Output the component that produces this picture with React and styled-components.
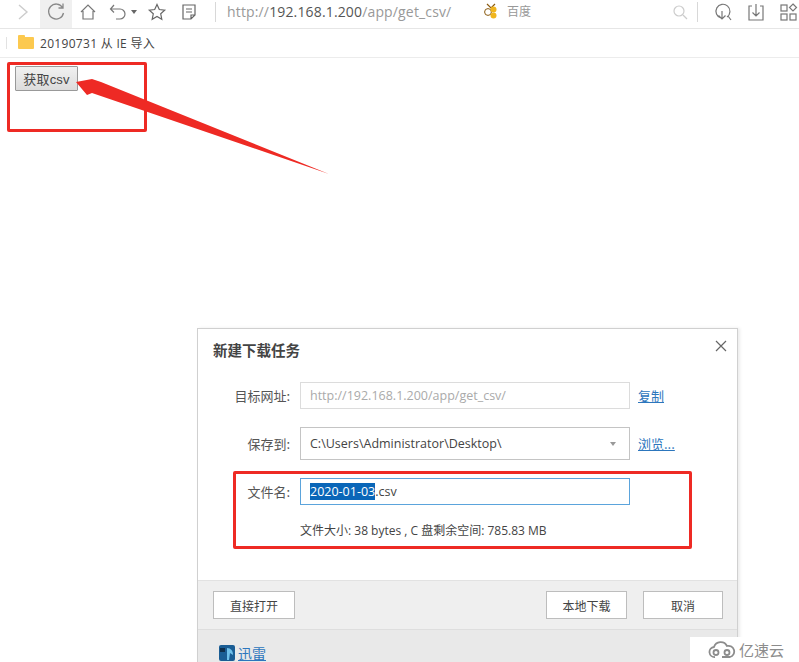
import React from 'react'
import styled, { createGlobalStyle } from 'styled-components'

const Global = createGlobalStyle`
  html, body { margin: 0; padding: 0; background: #fff; overflow: hidden; }
  body { width: 799px; height: 662px; font-family: "Open Sans", "Noto Sans CJK SC", sans-serif; color: #333; }
`

const Page = styled.div`
  position: relative;
  width: 799px;
  height: 662px;
  overflow: hidden;
  background: #fff;
`

const Toolbar = styled.div`
  display: flex;
  align-items: center;
  height: 28px;
  border-bottom: 1px solid #e6e6e6;
`

const Tool = styled.div`
  box-sizing: border-box;
  display: flex;
  align-items: center;
  justify-content: center;
  flex: none;
  width: ${p => p.$w || 30}px;
  height: 28px;
  padding-bottom: 5px;
  margin-left: ${p => p.$ml || 0}px;
  background: ${p => (p.$active ? '#f0f0f0' : 'transparent')};
`

const Divider = styled.div`
  flex: none;
  width: 1px;
  height: 20px;
  margin: 0 0 4px ${p => p.$ml || 0}px;
  background: #d8d8d8;
`

const Url = styled.div`
  flex: none;
  width: 240px;
  margin: 0 0 6px 11px;
  font-size: 14px;
  letter-spacing: 0.15px;
  color: #999;
  white-space: nowrap;
`

const Host = styled.span`
  color: #555;
`

const EngineName = styled.div`
  flex: none;
  width: 165px;
  margin: 0 0 6px 8px;
  font-size: 12px;
  color: #999;
`

const Bookmarks = styled.div`
  display: flex;
  align-items: center;
  height: 28px;
  padding-left: 6px;
  border-bottom: 1px solid #ececec;
  font-size: 12px;
  letter-spacing: 0.3px;
  color: #444;
`

const BarTick = styled.div`
  width: 1px;
  height: 12px;
  margin-right: 11px;
  background: #e2e2e2;
`

const Folder = styled.div`
  position: relative;
  width: 16px;
  height: 12px;
  margin-right: 6px;
  border-radius: 1px;
  background: #fcc94f;

  &::before {
    content: '';
    position: absolute;
    left: 0;
    top: -2px;
    width: 7px;
    height: 3px;
    border-radius: 1px 1px 0 0;
    background: #fcc94f;
  }
`

const Content = styled.div`
  padding: 8px 0 0 15px;
`

const GetButton = styled.button`
  display: block;
  box-sizing: border-box;
  width: 63px;
  height: 25px;
  padding: 0;
  border: 1px solid #999;
  border-radius: 1px;
  background: linear-gradient(#f1f1f1, #dcdcdc);
  font: 13px "Liberation Sans", "Noto Sans CJK SC", sans-serif;
  letter-spacing: 0.2px;
  color: #444;
`

const Dialog = styled.div`
  box-sizing: border-box;
  width: 541px;
  height: 334px;
  margin: 237px 0 0 182px;
  border: 1px solid #d0d0d0;
  border-bottom: 0;
  box-shadow: 2px 0 3px rgba(0, 0, 0, 0.08);
  background: #fff;
  display: flex;
  flex-direction: column;
`

const Head = styled.div`
  display: flex;
  align-items: flex-start;
  justify-content: space-between;
  height: 44px;
  padding: 10px 9px 0 15px;
  box-sizing: border-box;
`

const Title = styled.div`
  font: bold 14.5px/22px "Noto Sans CJK SC", sans-serif;
  color: #444;
`

const Close = styled.div`
  margin-top: -3px;
`

const Form = styled.div`
  flex: 1;
  display: flex;
  flex-direction: column;
  padding-top: 9px;
`

const Row = styled.div`
  display: flex;
  align-items: center;
  margin-bottom: ${p => p.$mb || 0}px;
`

const Label = styled.div`
  flex: none;
  width: 92px;
  text-align: right;
  font: 13px "Noto Sans CJK SC", sans-serif;
  color: #555;
`

const Field = styled.div`
  box-sizing: border-box;
  display: flex;
  align-items: center;
  justify-content: space-between;
  flex: none;
  width: 330px;
  height: ${p => p.$h}px;
  margin-left: 10px;
  padding: 0 13px 0 9px;
  border: 1px solid ${p => p.$border};
  font-size: 12.5px;
  color: ${p => p.$color || '#444'};
  white-space: nowrap;
`

const Selected = styled.span`
  background: #0a66b8;
  color: #fff;
`

const Caret = styled.div`
  width: 0;
  height: 0;
  border-left: ${p => p.$size || 4}px solid transparent;
  border-right: ${p => p.$size || 4}px solid transparent;
  border-top: ${p => (p.$size || 4) + 1}px solid ${p => p.$color || '#999'};
`

const LinkText = styled.a`
  margin-left: 8px;
  font: 13px "Noto Sans CJK SC", sans-serif;
  color: #2c76bd;
  text-decoration: underline;
`

const Info = styled.div`
  margin: 16px 0 0 102px;
  font-size: 12px;
  color: #444;
  white-space: nowrap;
`

const Footer = styled.div`
  box-sizing: border-box;
  flex: none;
  display: flex;
  align-items: center;
  height: 49px;
  padding: 0 14px 0 15px;
  border-top: 1px solid #e2e2e2;
  background: #efefef;
`

const FootButton = styled.div`
  box-sizing: border-box;
  display: flex;
  align-items: center;
  justify-content: center;
  width: ${p => p.$w}px;
  height: 28px;
  margin-left: ${p => p.$ml || 0}px;
  border: 1px solid #bdbdbd;
  background: #fff;
  font: 12px "Noto Sans CJK SC", sans-serif;
  color: #444;
`

const Brand = styled.div`
  box-sizing: border-box;
  flex: none;
  display: flex;
  align-items: flex-start;
  gap: 3px;
  height: 33px;
  padding: 15px 0 0 21px;
  border-top: 1px solid #dedede;
  background: #e9e9e9;
  font: 14px/16px "Noto Sans CJK SC", sans-serif;
  color: #2c76bd;
  text-decoration: underline;
`

const Mark = styled.div`
  position: absolute;
  left: ${p => p.$x}px;
  top: ${p => p.$y}px;
  width: ${p => p.$w}px;
  height: ${p => p.$h}px;
  box-sizing: border-box;
  border: 3px solid #ee2a24;
  border-radius: 2px;
  pointer-events: none;
`

const ArrowLayer = styled.svg`
  position: absolute;
  left: 0;
  top: 0;
  pointer-events: none;
`

const Watermark = styled.div`
  position: absolute;
  right: 0;
  bottom: 0;
  display: flex;
  align-items: center;
  gap: 2px;
  box-sizing: border-box;
  width: 109px;
  height: 25px;
  padding-left: 17px;
  background: #fff;
  font: 15px "Noto Sans CJK SC", sans-serif;
  color: #8c8c8c;
`

const Line = ({ w = 20, h = 20, children, color = '#777', sw = 1.2 }) => (
  <svg width={w} height={h} viewBox={`0 0 ${w} ${h}`} fill="none" stroke={color} strokeWidth={sw}>
    {children}
  </svg>
)

export default function App() {
  return (
    <Page>
      <Global />
      <Toolbar>
        <Tool $w={20} $ml={13}>
          <Line w={12} h={20} color="#ccc" sw={1.4}><path d="M2 3l8 7-8 7" /></Line>
        </Tool>
        <Tool $w={32} $ml={7} $active>
          <Line w={20} h={20} color="#888" sw={1.3}><path d="M16.5 5.5A7.5 7.5 0 1 0 17.5 11M17 1.5v4.5h-4.5" /></Line>
        </Tool>
        <Tool $w={32}>
          <Line color="#777"><path d="M3 10l7-7 7 7M5 9v8h10V9" /></Line>
        </Tool>
        <Tool $w={24} $ml={2}>
          <Line color="#777"><path d="M3 7h9a5 5 0 0 1 0 10H8M6 3L2.5 7 6 10.5" /></Line>
        </Tool>
        <Tool $w={8}>
          <Caret $size={3} $color="#666" />
        </Tool>
        <Tool $w={32} $ml={3}>
          <Line color="#666"><path d="M10 2.5l2.3 5 5.4.6-4 3.7 1.1 5.400-4.8-2.800-4.8 2.800 1.100-5.400-4-3.700 5.400-.6z" /></Line>
        </Tool>
        <Tool $w={32}>
          <Line color="#666"><path d="M4 3h12v10l-4 4H4zM7 7h6M7 10h6M12 17v-4h4" /></Line>
        </Tool>
        <Divider $ml={10} />
        <Url>http://<Host>192.168.1.200</Host>/app/get_csv/</Url>
        <Tool $w={16} $ml={16}>
          <svg width="16" height="18" viewBox="0 0 16 18">
            <path d="M4 1l4 4 4-4" fill="none" stroke="#8a5a10" strokeWidth="1.2" />
            <circle cx="5" cy="9" r="3.4" fill="#fff" stroke="#8a5a10" />
            <circle cx="10.5" cy="6.5" r="3" fill="#f0b51e" />
            <circle cx="10.5" cy="12.5" r="3" fill="#f0b51e" />
          </svg>
        </Tool>
        <EngineName>百度</EngineName>
        <Tool $w={16}>
          <Line w={16} h={16} color="#ccc"><circle cx="7" cy="7" r="5" /><path d="M11 11l4 4" /></Line>
        </Tool>
        <Divider $ml={9} />
        <Tool $w={24} $ml={13}>
          <Line color="#777"><path d="M14 15a7 7 0 1 0-6 1M15 14l3 4M9 9v8M5.5 13.5L9 17l3.5-3.5" /></Line>
        </Tool>
        <Tool $w={24} $ml={9}>
          <Line color="#777"><path d="M6 4H3v14h14V4h-3M10 2v12M6.5 10.5L10 14l3.5-3.5" /></Line>
        </Tool>
        <Tool $w={20} $ml={10}>
          <Line color="#777"><rect x="3" y="3" width="6" height="6" /><rect x="3" y="12" width="6" height="6" /><rect x="12" y="12" width="6" height="6" /><path d="M15 2l3.5 3.5L15 9l-3.5-3.5z" /></Line>
        </Tool>
      </Toolbar>
      <Bookmarks>
        <BarTick />
        <Folder />
        20190731 从 IE 导入
      </Bookmarks>
      <Content>
        <GetButton>获取csv</GetButton>
        <Dialog>
          <Head>
            <Title>新建下载任务</Title>
            <Close>
              <Line w={14} h={14} color="#666"><path d="M2 2l10 10M12 2L2 12" /></Line>
            </Close>
          </Head>
          <Form>
            <Row $mb={18}>
              <Label>目标网址:</Label>
              <Field $h={27} $border="#dcdcdc" $color="#aaa">http://192.168.1.200/app/get_csv/</Field>
              <LinkText>复制</LinkText>
            </Row>
            <Row $mb={18}>
              <Label>保存到:</Label>
              <Field $h={33} $border="#c4c4c4">C:\Users\Administrator\Desktop\<Caret $size={3} /></Field>
              <LinkText>浏览...</LinkText>
            </Row>
            <Row>
              <Label>文件名:</Label>
              <Field $h={27} $border="#5ba4dc"><span><Selected>2020-01-03</Selected>.csv</span></Field>
            </Row>
            <Info>文件大小: 38 bytes , C 盘剩余空间: 785.83 MB</Info>
          </Form>
          <Footer>
            <FootButton $w={82}>直接打开</FootButton>
            <FootButton $w={81} $ml={251}>本地下载</FootButton>
            <FootButton $w={80} $ml={16}>取消</FootButton>
          </Footer>
          <Brand>
            <svg width="16" height="16" viewBox="0 0 16 16">
              <rect width="16" height="16" rx="2" fill="#1a5d94" />
              <path d="M1 3h5v4H1z" fill="#0f2f4c" />
              <path d="M8 3c4 0 6 3 6 7l-3-2-1 7H8z" fill="#6fc0ea" />
            </svg>
            迅雷
          </Brand>
        </Dialog>
      </Content>
      <Mark $x={7} $y={62} $w={140} $h={70} />
      <Mark $x={233} $y={471} $w={459} $h={78} />
      <ArrowLayer width="799" height="662">
        <path d="M329 174L101 82l-9-3-16 3 11 13 5-2z" fill="#ee2a24" />
      </ArrowLayer>
      <Watermark>
        <svg width="30" height="18" viewBox="0 0 30 18" fill="none" stroke="#8c8c8c" strokeWidth="1.8">
          <path d="M8 16a5 5 0 0 1-1-10 7 7 0 0 1 13-1 5.500 5.500 0 0 1 3 11h-8" />
          <circle cx="9" cy="11.500" r="2.500" />
          <circle cx="20" cy="11.500" r="2.500" />
        </svg>
        亿速云
      </Watermark>
    </Page>
  )
}
